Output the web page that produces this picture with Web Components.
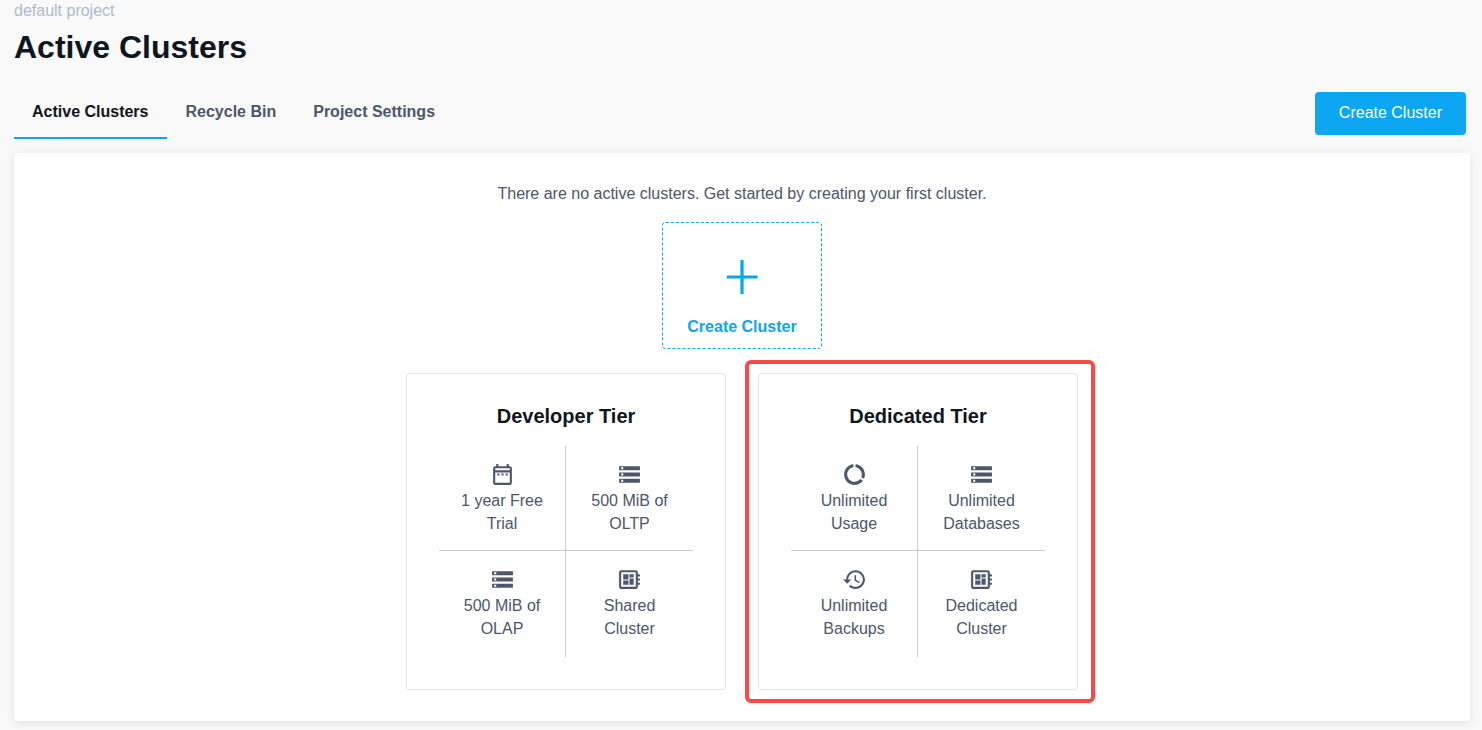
<!DOCTYPE html>
<html lang="en">
<head>
<meta charset="utf-8">
<title>Active Clusters</title>
<style>
  body {
    margin: 0;
    background: #f9f9f9;
    color: #4c566c;
    font: 16px/24px "Liberation Sans", Arial, sans-serif;
  }
</style>
</head>
<body>
<clusters-page></clusters-page>

<script>
const ICONS = {
  calendar: '<path d="M7 11h2v2H7v-2zm14-5v14c0 1.100-.9 2-2 2H5c-1.110 0-2-.9-2-2l.010-14c0-1.100.880-2 1.990-2h1V2h2v2h8V2h2v2h1c1.100 0 2 .9 2 2zM5 8h14V6H5v2zm14 12V10H5v10h14zm-4-7h2v-2h-2v2zm-4 0h2v-2h-2v2z"/>',
  storage: '<path d="M2 20h20v-4H2v4zm2-3h2v2H4v-2zM2 4v4h20V4H2zm4 3H4V5h2v2zm-4 7h20v-4H2v4zm2-3h2v2H4v-2z"/>',
  usage: '<path d="M13 2.050v3.030c3.390.490 6 3.390 6 6.920 0 .9-.180 1.750-.480 2.540l2.600 1.530c.560-1.240.880-2.620.880-4.070 0-5.180-3.950-9.450-9-9.950zM12 19c-3.870 0-7-3.130-7-7 0-3.530 2.610-6.430 6-6.920V2.050c-5.060.5-9 4.760-9 9.950 0 5.520 4.470 10 9.990 10 3.310 0 6.240-1.610 8.060-4.090l-2.600-1.530C16.170 17.980 14.210 19 12 19z"/>',
  history: '<path d="M13 3c-4.970 0-9 4.030-9 9H1l3.890 3.890.070.140L9 12H6c0-3.870 3.130-7 7-7s7 3.130 7 7-3.130 7-7 7c-1.930 0-3.680-.790-4.940-2.060l-1.420 1.420C8.270 19.990 10.510 21 13 21c4.970 0 9-4.030 9-9s-4.030-9-9-9zm-1 5v5l4.280 2.540.720-1.210-3.500-2.080V8H12z"/>',
  board: '<path d="M22 9V7h-2V5c0-1.100-.9-2-2-2H4c-1.100 0-2 .9-2 2v14c0 1.100.9 2 2 2h14c1.100 0 2-.9 2-2v-2h2v-2h-2v-2h2v-2h-2V9h2zm-4 10H4V5h14v14zM6 13h5v4H6v-4zm6-6h4v3h-4V7zM6 7h5v5H6V7zm6 4h4v6h-4v-6z"/>'
};

class UiElement extends HTMLElement {
  constructor() {
    super();
    const template = document.createElement('template');
    template.innerHTML = this.template();
    this.attachShadow({ mode: 'open' }).append(template.content.cloneNode(true));
  }
}

customElements.define('page-header', class extends UiElement {
  template() {
    return `<style>
      :host { display: block; color: #afb9cd; }
      h1 { margin: 0; color: #0f1620; font-size: 32px; line-height: 50px; }
      div { line-height: 22px; }
    </style>
    <div><slot name="project"></slot></div>
    <h1><slot></slot></h1>`;
  }
});

customElements.define('nav-tab', class extends UiElement {
  static observedAttributes = ['href'];
  template() {
    return `<style>
      :host { display: block; }
      a {
        display: block; padding: 16px 18px 13px; border-bottom: 2px solid transparent;
        color: #4c566c; font-weight: 700; text-decoration: none;
      }
      :host([active]) a { color: #0f1620; border-color: #0ca6f2; }
    </style>
    <a><slot></slot></a>`;
  }
  attributeChangedCallback(name, old, value) {
    this.shadowRoot.querySelector('a').setAttribute('href', value);
  }
});

customElements.define('primary-button', class extends UiElement {
  template() {
    return `<style>
      :host { display: block; }
      button {
        display: block; height: 43px; padding: 0 24px 2px; border: 0; border-radius: 4px;
        background: #0ca6f2; color: #fff; font: inherit; cursor: pointer;
      }
    </style>
    <button type="button"><slot></slot></button>`;
  }
});

customElements.define('create-tile', class extends UiElement {
  template() {
    return `<style>
      :host { display: block; }
      button {
        box-sizing: border-box; width: 160px; height: 127px; padding: 36px 0 9px;
        display: flex; flex-direction: column; align-items: center; justify-content: space-between;
        border: 1px dashed #0ca6f2; border-radius: 4px; background: none;
        color: #0ca6f2; font: inherit; font-weight: 700; cursor: pointer;
      }
      svg { display: block; }
    </style>
    <button type="button">
      <svg width="32" height="36" viewBox="0 0 32 36" fill="none" stroke="#00a8ea" stroke-width="3.200" aria-hidden="true"><path d="M16 1v34M1 18h30.500"/></svg>
      <slot></slot>
    </button>`;
  }
});

customElements.define('tier-feature', class extends UiElement {
  static observedAttributes = ['icon'];
  template() {
    return `<style>
      :host { display: block; padding: 16px 16px 15px; text-align: center; line-height: 23px; }
      svg { display: block; width: 25px; height: 25px; margin: 0 auto 2px; fill: #4c566c; }
    </style>
    <svg viewBox="0 0 24 24" aria-hidden="true"></svg>
    <slot></slot>`;
  }
  attributeChangedCallback(name, old, value) {
    this.shadowRoot.querySelector('svg').innerHTML = ICONS[value];
  }
});

customElements.define('tier-card', class extends UiElement {
  template() {
    return `<style>
      :host {
        display: block; position: relative; box-sizing: border-box; width: 320px;
        padding: 24px 32px 32px; border: 1px solid #e5e5e5; border-radius: 4px;
      }
      :host([highlighted])::after {
        content: ""; position: absolute; inset: -14px -18px -14px -14px;
        border: 4px solid #f94a47; border-radius: 6px; pointer-events: none;
      }
      h2 { margin: 0 0 12px; color: #0f1620; font-size: 20px; line-height: 36px; text-align: center; }
      .features { display: grid; grid-template-columns: 1fr 1fr; }
      ::slotted(tier-feature:nth-of-type(odd)) { border-right: 1px solid #ccc; }
      ::slotted(tier-feature:nth-of-type(-n+2)) { border-bottom: 1px solid #ccc; }
      ::slotted(tier-feature:nth-of-type(n+3)) { padding-bottom: 17px; }
    </style>
    <h2><slot name="title"></slot></h2>
    <div class="features"><slot></slot></div>`;
  }
});

customElements.define('content-panel', class extends UiElement {
  template() {
    return `<style>
      :host {
        display: flex; flex-direction: column; align-items: center; padding: 28px 24px 31px;
        background: #fff; border-radius: 4px; box-shadow: 0 2px 8px rgba(0, 0, 0, .1);
      }
    </style>
    <slot></slot>`;
  }
});

customElements.define('clusters-page', class extends UiElement {
  template() {
    return `<style>
      :host { display: block; padding: 0 12px 9px 14px; }
      .bar { display: flex; justify-content: space-between; align-items: flex-end; padding: 12px 4px 14px 0; }
      nav { display: flex; gap: 1px; }
      primary-button { padding-bottom: 4px; }
      p { margin: 0 0 16px; line-height: 25px; }
      .tiers { display: flex; flex-wrap: wrap; justify-content: center; gap: 32px; margin-top: 24px; }
    </style>
    <page-header><span slot="project">default project</span>Active Clusters</page-header>
    <div class="bar">
      <nav>
        <nav-tab href="#active" active>Active Clusters</nav-tab>
        <nav-tab href="#recycle">Recycle Bin</nav-tab>
        <nav-tab href="#settings">Project Settings</nav-tab>
      </nav>
      <primary-button>Create Cluster</primary-button>
    </div>
    <content-panel>
      <p>There are no active clusters. Get started by creating your first cluster.</p>
      <create-tile>Create Cluster</create-tile>
      <div class="tiers">
        <tier-card>
          <span slot="title">Developer Tier</span>
          <tier-feature icon="calendar">1 year Free Trial</tier-feature>
          <tier-feature icon="storage">500 MiB of OLTP</tier-feature>
          <tier-feature icon="storage">500 MiB of OLAP</tier-feature>
          <tier-feature icon="board">Shared Cluster</tier-feature>
        </tier-card>
        <tier-card highlighted>
          <span slot="title">Dedicated Tier</span>
          <tier-feature icon="usage">Unlimited Usage</tier-feature>
          <tier-feature icon="storage">Unlimited Databases</tier-feature>
          <tier-feature icon="history">Unlimited Backups</tier-feature>
          <tier-feature icon="board">Dedicated Cluster</tier-feature>
        </tier-card>
      </div>
    </content-panel>`;
  }
});
</script>
</body>
</html>
